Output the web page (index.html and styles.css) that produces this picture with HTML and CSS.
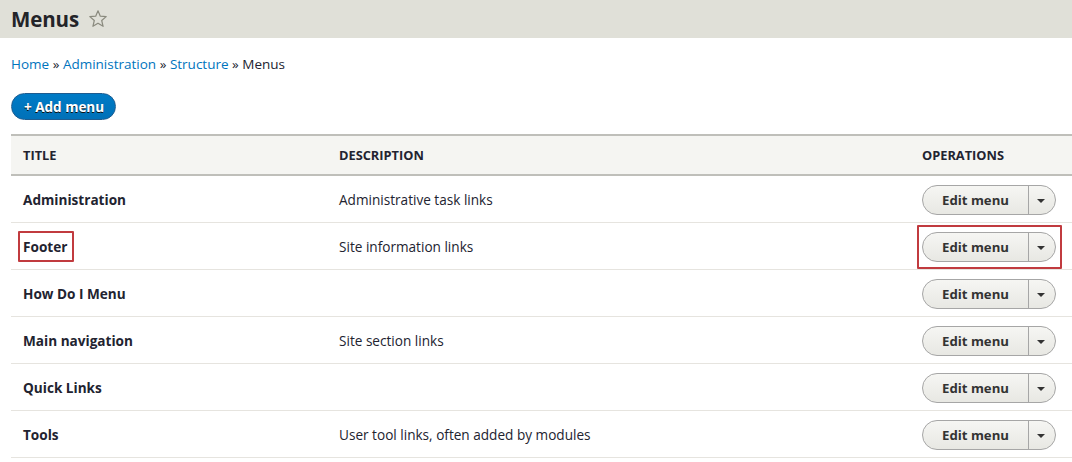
FILE: index.html
```html
<!DOCTYPE html>
<html>
<head>
<meta charset="utf-8">
<link rel="stylesheet" href="styles.css">
</head>
<body>
<header class="page-head">
  <h1 class="page-title">Menus</h1>
  <svg class="star" width="20" height="20" viewBox="0 0 20 20"><path d="M10 1.8 L12.3 7.2 L18.2 7.6 L13.7 11.5 L15.1 17.3 L10 14.2 L4.9 17.3 L6.3 11.5 L1.8 7.6 L7.7 7.2 Z" fill="none" stroke="#8a8a7e" stroke-width="1.2" stroke-linejoin="round"/></svg>
</header>
<main class="content">
  <nav class="breadcrumb"><a href="#">Home</a> » <a href="#">Administration</a> » <a href="#">Structure</a> » <span>Menus</span></nav>
  <div class="actions"><a class="btn-primary" href="#">+ Add menu</a></div>
  <table class="menus">
    <thead>
      <tr><th class="c-title">Title</th><th class="c-desc">Description</th><th class="c-ops">Operations</th></tr>
    </thead>
    <tbody>
      <tr><td class="c-title">Administration</td><td class="c-desc">Administrative task links</td><td class="c-ops"><div class="dropbutton"><span class="db-main">Edit menu</span><span class="db-toggle"><i class="caret"></i></span></div></td></tr>
      <tr><td class="c-title"><span class="hl-text">Footer</span></td><td class="c-desc">Site information links</td><td class="c-ops"><div class="dropbutton hl-btn"><span class="db-main">Edit menu</span><span class="db-toggle"><i class="caret"></i></span></div></td></tr>
      <tr><td class="c-title">How Do I Menu</td><td class="c-desc"></td><td class="c-ops"><div class="dropbutton"><span class="db-main">Edit menu</span><span class="db-toggle"><i class="caret"></i></span></div></td></tr>
      <tr><td class="c-title">Main navigation</td><td class="c-desc">Site section links</td><td class="c-ops"><div class="dropbutton"><span class="db-main">Edit menu</span><span class="db-toggle"><i class="caret"></i></span></div></td></tr>
      <tr><td class="c-title">Quick Links</td><td class="c-desc"></td><td class="c-ops"><div class="dropbutton"><span class="db-main">Edit menu</span><span class="db-toggle"><i class="caret"></i></span></div></td></tr>
      <tr><td class="c-title">Tools</td><td class="c-desc">User tool links, often added by modules</td><td class="c-ops"><div class="dropbutton"><span class="db-main">Edit menu</span><span class="db-toggle"><i class="caret"></i></span></div></td></tr>
    </tbody>
  </table>
</main>
</body>
</html>
```

FILE: styles.css
```css
html, body {
  margin: 0;
  padding: 0;
  background: #fff;
}
body {
  font-family: "Open Sans", "Noto Sans", sans-serif;
  font-size: 13.6px;
  color: #222330;
  overflow: hidden;
}
.page-head {
  height: 38px;
  background: #e0e0d8;
  display: flex;
  align-items: center;
  padding-left: 11px;
  gap: 9px;
}
.page-title {
  margin: 0;
  font-size: 20.5px;
  font-weight: 700;
  color: #232429;
  line-height: 1;
  letter-spacing: -0.1px;
}
.star {
  margin-top: 0;
}
.content {
  padding: 0 0 0 11px;
}
.breadcrumb {
  margin-top: 17px;
  line-height: 18px;
  color: #222330;
  font-size: 13.5px;
}
.breadcrumb a {
  color: #0074bd;
  text-decoration: none;
}
.actions {
  margin-top: 20px;
  height: 27px;
}
.btn-primary {
  display: inline-flex;
  align-items: center;
  height: 25px;
  padding: 0 11px 0 12px;
  border: 1px solid #1e5c90;
  border-radius: 14px;
  background: linear-gradient(#007bc6, #0071b8);
  color: #fff;
  font-weight: 700;
  font-size: 13.5px;
  text-decoration: none;
  text-shadow: 0 1px 0 #111;
}
.menus {
  margin-top: 14px;
  width: 100%;
  border-collapse: collapse;
}
.menus th {
  background: #f5f5f2;
  border-top: 2px solid #bfbfba;
  border-bottom: 2px solid #bfbfba;
  height: 38px;
  padding: 0 12px;
  text-align: left;
  text-transform: uppercase;
  font-size: 12.8px;
  font-weight: 700;
  color: #222330;
}
.menus td {
  height: 46px;
  padding: 0 12px;
  border-bottom: 1px solid #e6e4df;
  vertical-align: middle;
}
.menus td.c-title {
  font-weight: 700;
}
.c-title { width: 292px; }
.c-desc { width: auto; }
.c-ops { width: 138px; }
.dropbutton {
  display: inline-flex;
  height: 28px;
  border: 1px solid #a6a6a6;
  border-radius: 15px;
  background: linear-gradient(#f6f6f3, #e8e8e3);
  margin-top: 1px;
  position: relative;
}
.db-main {
  display: flex;
  align-items: center;
  justify-content: center;
  width: 105px;
  font-weight: 700;
  font-size: 13.2px;
  color: #333;
  border-right: 1px solid #a6a6a6;
}
.db-toggle {
  display: flex;
  align-items: center;
  justify-content: center;
  width: 26px;
}
.caret {
  display: block;
  width: 0;
  height: 0;
  border-left: 4px solid transparent;
  border-right: 4px solid transparent;
  border-top: 4px solid #333;
  margin-left: -2px;
  margin-top: 2px;
}
.hl-text {
  position: relative;
}
.hl-text::after {
  content: "";
  position: absolute;
  left: -5px;
  top: -6px;
  right: -7px;
  bottom: -6px;
  border: 2px solid #c13b3f;
  border-radius: 1px;
}
.hl-btn::after {
  content: "";
  position: absolute;
  left: -6px;
  top: -8px;
  right: -7px;
  bottom: -8px;
  border: 2px solid #c13b3f;
  border-radius: 1px;
}
```
